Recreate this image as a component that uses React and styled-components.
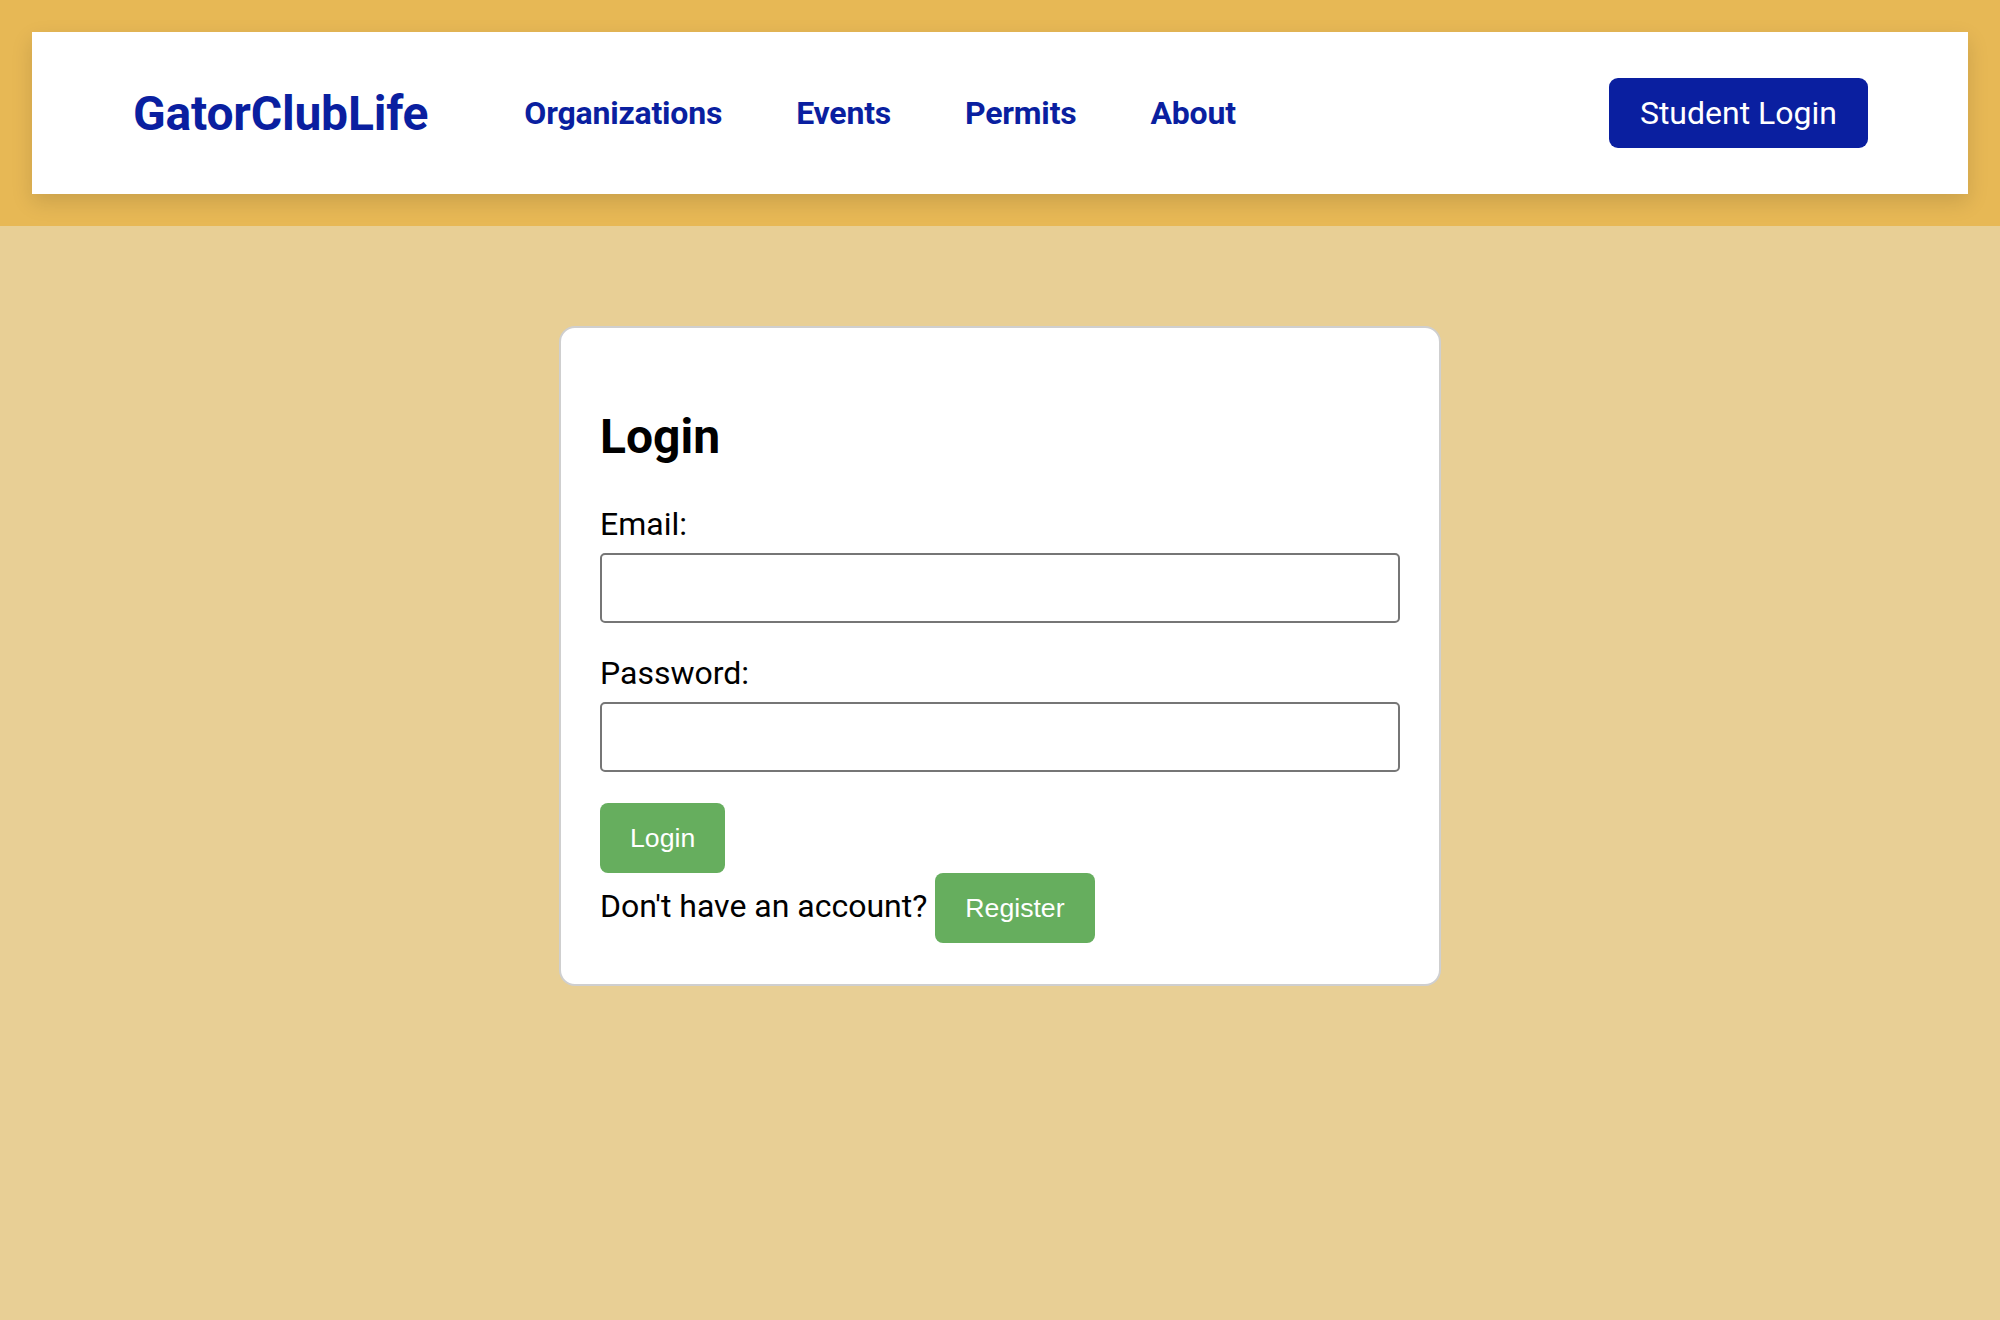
import styled, { createGlobalStyle } from "styled-components";

const GlobalStyle = createGlobalStyle`
  html, body {
    margin: 0;
    padding: 0;
  }
  body {
    font-family: Roboto, "Liberation Sans", sans-serif;
    background: #e8cf95;
  }
  * {
    box-sizing: border-box;
  }
`;

export default function App() {
  return (
    <>
      <GlobalStyle />
      <Page>
        <HeaderBand>
          <NavBar>
            <Logo>GatorClubLife</Logo>
            <NavLinks>
              <NavLink>Organizations</NavLink>
              <NavLink>Events</NavLink>
              <NavLink>Permits</NavLink>
              <NavLink>About</NavLink>
            </NavLinks>
            <StudentLoginButton>Student Login</StudentLoginButton>
          </NavBar>
        </HeaderBand>
        <Main>
          <LoginCard>
            <Title>Login</Title>
            <FormGroup>
              <Label>Email:</Label>
              <Input type="email" />
            </FormGroup>
            <FormGroup>
              <Label>Password:</Label>
              <Input type="password" />
            </FormGroup>
            <GreenButton>Login</GreenButton>
            <RegisterLine>
              Don't have an account? <GreenButton>Register</GreenButton>
            </RegisterLine>
          </LoginCard>
        </Main>
      </Page>
    </>
  );
}

const Page = styled.div`
  min-height: 100vh;
  background: #e8cf95;
`;

const HeaderBand = styled.header`
  background: #e7b855;
  padding: 32px;
`;

const NavBar = styled.nav`
  height: 162px;
  background: #ffffff;
  display: flex;
  align-items: center;
  padding: 0 100px 0 101px;
  box-shadow: 0 8px 20px rgba(0, 0, 0, 0.13);
`;

const Logo = styled.div`
  font-size: 48px;
  font-weight: 700;
  color: #0a1fa0;
  letter-spacing: -0.2px;
`;

const NavLinks = styled.div`
  display: flex;
  gap: 74px;
  margin-left: 96px;
`;

const NavLink = styled.a`
  font-size: 32px;
  font-weight: 700;
  color: #0a1fa0;
  text-decoration: none;
  letter-spacing: -0.2px;
`;

const StudentLoginButton = styled.button`
  margin-left: auto;
  background: #0a1fa0;
  color: #ffffff;
  border: none;
  border-radius: 9px;
  font-family: Roboto, sans-serif;
  font-size: 32px;
  padding: 16px 31px;
  height: 70px;
`;

const Main = styled.main`
  display: flex;
  justify-content: center;
  padding-top: 100px;
`;

const LoginCard = styled.div`
  width: 882px;
  background: #ffffff;
  border: 2px solid #cfcfcf;
  border-radius: 16px;
  padding: 40px 39px 41px;
`;

const Title = styled.h2`
  font-size: 48px;
  font-weight: 700;
  margin: 40px 0 40px;
  color: #000;
`;

const FormGroup = styled.div`
  margin-bottom: 31px;
`;

const Label = styled.label`
  display: block;
  font-size: 32px;
  color: #000;
  margin-bottom: 10px;
`;

const Input = styled.input`
  display: block;
  width: 100%;
  height: 70px;
  border: 2px solid #767676;
  border-radius: 5px;
  background: #fff;
`;

const GreenButton = styled.button`
  background: #66ae5e;
  color: #ffffff;
  border: none;
  border-radius: 8px;
  font-family: "Liberation Sans", Arial, sans-serif;
  font-size: 26.67px;
  padding: 20px 30px;
  line-height: 30px;
`;

const RegisterLine = styled.p`
  margin: 0;
  font-size: 32px;
  color: #000;
`;
